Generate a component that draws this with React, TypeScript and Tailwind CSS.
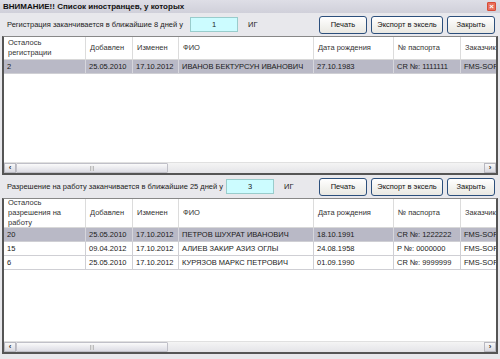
const cols = [82, 47, 46, 135, 80, 67, 60];

const rows1 = [
  { left: '2', added: '25.05.2010', changed: '17.10.2012', fio: 'ИВАНОВ БЕКТУРСУН ИВАНОВИЧ', born: '27.10.1983', pass: 'CR №: 1111111', client: 'FMS-SOFT', sel: true },
];

const rows2 = [
  { left: '20', added: '25.05.2010', changed: '17.10.2012', fio: 'ПЕТРОВ ШУХРАТ ИВАНОВИЧ', born: '18.10.1991', pass: 'CR №: 1222222', client: 'FMS-SOFT', sel: true },
  { left: '15', added: '09.04.2012', changed: '17.10.2012', fio: 'АЛИЕВ ЗАКИР АЗИЗ ОГЛЫ', born: '24.08.1958', pass: 'P №: 0000000', client: 'FMS-SOFT', sel: false },
  { left: '6', added: '25.05.2010', changed: '17.10.2012', fio: 'КУРЯЗОВ МАРКС ПЕТРОВИЧ', born: '01.09.1990', pass: 'CR №: 9999999', client: 'FMS-SOFT', sel: false },
];

type Row = (typeof rows1)[number];

const XpButton = ({ label, width }: { label: string; width: string }) => (
  <div
    className={`${width} h-[18px] flex items-center justify-center rounded-[3px] border border-[#2c4f7c] bg-gradient-to-b from-white to-[#e9e8e2] text-[7.5px] text-[#111]`}
  >
    {label}
  </div>
);

const Toolbar = ({ text, value, inputLeft }: { text: string; value: string; inputLeft: string }) => (
  <div className="h-[23px] flex items-center pl-[7px] pr-[5px]">
    <span className={`${inputLeft} whitespace-nowrap text-[7.5px] text-[#222]`}>{text}</span>
    <div className="w-[48px] h-[15px] bg-[#ccfcff] border border-[#9cc] flex items-center justify-center text-[7.5px] text-[#222]">
      {value}
    </div>
    <span className="ml-[10px] text-[7.5px] text-[#222]">ИГ</span>
    <div className="ml-auto flex gap-[4px]">
      <XpButton label="Печать" width="w-[48px]" />
      <XpButton label="Экспорт в эксель" width="w-[72px]" />
      <XpButton label="Закрыть" width="w-[48px]" />
    </div>
  </div>
);

const Scrollbar = () => (
  <div className="h-[11px] flex bg-gradient-to-b from-[#f4f4f4] to-[#e4e4e8] border-t border-[#e0e0e0]">
    <div className="w-[12px] h-full flex items-center justify-center bg-gradient-to-b from-[#f8f8f8] to-[#d8d8e0] border border-[#b8b8c0] text-[8px] font-bold text-[#333] leading-none">
      ‹
    </div>
    <div className="w-[152px] h-full flex items-center justify-center bg-gradient-to-b from-[#fafafa] to-[#dcdce4] border border-[#c0c0c8] rounded-[1px]">
      <div className="w-[4px] h-[5px] border-x border-[#bbb] bg-[#ddd]" />
    </div>
    <div className="flex-1" />
    <div className="w-[12px] h-full flex items-center justify-center bg-gradient-to-b from-[#f8f8f8] to-[#d8d8e0] border border-[#b8b8c0] text-[8px] font-bold text-[#333] leading-none">
      ›
    </div>
  </div>
);

const Grid = ({ head, rows, headH }: { head: string; rows: Row[]; headH: string }) => {
  const heads = [head, 'Добавлен', 'Изменен', 'ФИО', 'Дата рождения', '№ паспорта', 'Заказчик'];
  return (
    <div className="flex-1 mx-[2px] flex flex-col border-l-2 border-t border-r-2 border-b-2 border-l-[#555] border-t-[#888] border-r-[#555] border-b-[#555] bg-white overflow-hidden">
      <div className={`${headH} flex border-b border-[#d8d8d8]`}>
        {heads.map((h, i) => (
          <div
            key={i}
            style={{ width: cols[i] }}
            className="shrink-0 flex items-center pl-[4px] border-r border-[#dcdcdc] text-[7.5px] leading-[10px] text-[#333] whitespace-pre-line overflow-hidden"
          >
            {h}
          </div>
        ))}
      </div>
      {rows.map((r, k) => {
        const cells = [r.left, r.added, r.changed, r.fio, r.born, r.pass, r.client];
        return (
          <div key={k} className={`h-[14px] flex border-b border-[#cfcfd4] ${r.sel ? 'bg-[#b9b9c6]' : 'bg-white'}`}>
            {cells.map((c, i) => (
              <div
                key={i}
                style={{ width: cols[i] }}
                className={`shrink-0 flex items-center pl-[3px] border-r ${r.sel ? 'border-[#d6d6dc]' : 'border-[#cfcfd4]'} text-[7.5px] text-[#1a1a1a] whitespace-nowrap overflow-hidden`}
              >
                {c}
              </div>
            ))}
          </div>
        );
      })}
      <div className="flex-1" />
      <Scrollbar />
    </div>
  );
};

export default function App() {
  return (
    <div
      className="w-[500px] h-[359px] flex flex-col bg-[#e8e8ec] overflow-hidden"
      style={{ fontFamily: '"Liberation Sans", Arial, sans-serif' }}
    >
      <div className="h-[13px] flex items-center pl-[3px] pr-[4px] bg-gradient-to-b from-[#dedee6] to-[#d0d0da]">
        <span className="text-[8px] font-bold text-[#111] whitespace-nowrap">ВНИМАНИЕ!! Список иностранцев, у которых</span>
        <div className="ml-auto w-[9px] h-[9px] rounded-[1px] bg-[#e8705c] border border-[#d84c38] flex items-center justify-center text-white text-[8px] font-bold leading-none">
          ×
        </div>
      </div>
      <div className="h-[23px]">
        <Toolbar text="Регистрация заканчивается в ближайшие 8 дней у" value="1" inputLeft="w-[183px]" />
      </div>
      <div className="h-[139px] flex flex-col">
        <Grid head={'Осталось\nрегистрации'} rows={rows1} headH="h-[23px]" />
      </div>
      <Toolbar text="Разрешение на работу заканчивается в ближайшие 25 дней у" value="3" inputLeft="w-[219px]" />
      <div className="h-[156px] flex flex-col">
        <Grid head={'Осталось\nразрешения на\nработу'} rows={rows2} headH="h-[29px]" />
      </div>
      <div className="flex-1" />
    </div>
  );
}
